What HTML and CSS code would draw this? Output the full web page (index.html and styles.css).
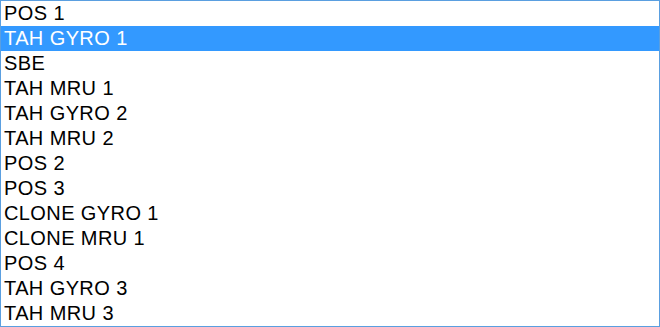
FILE: index.html
```html
<!DOCTYPE html>
<html>
<head>
<meta charset="utf-8">
<title>List</title>
<link rel="stylesheet" href="styles.css">
</head>
<body>
<ul class="list">
	<li>POS 1</li>
	<li class="sel">TAH GYRO 1</li>
	<li>SBE</li>
	<li>TAH MRU 1</li>
	<li>TAH GYRO 2</li>
	<li>TAH MRU 2</li>
	<li>POS 2</li>
	<li>POS 3</li>
	<li>CLONE GYRO 1</li>
	<li>CLONE MRU 1</li>
	<li>POS 4</li>
	<li>TAH GYRO 3</li>
	<li>TAH MRU 3</li>
</ul>
</body>
</html>
```
FILE: styles.css
```css
html,body{
	margin:0;
	padding:0;
	background:#fff;
}
.list{
	width:658px;
	height:325px;
	margin:0;
	padding:0;
	list-style:none;
	border:1px solid #5a9fe0;
	overflow:hidden;
	font:20px/25px "Liberation Sans", Arial, sans-serif;
	letter-spacing:0.4px;
	color:#000;
}
.list li{
	height:25px;
	padding-left:3px;
	white-space:nowrap;
}
.list .sel{
	background:#3399ff;
	color:#fff;
}
```
